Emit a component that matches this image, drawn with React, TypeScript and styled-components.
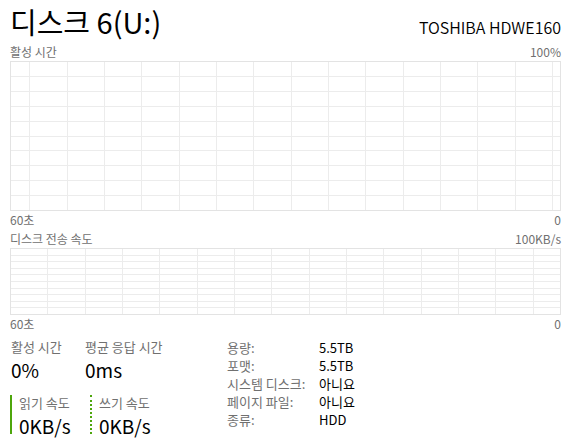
import { FC, Fragment } from 'react';
import styled, { createGlobalStyle } from 'styled-components';

const GlobalStyle = createGlobalStyle`
  html, body {
    margin: 0;
    padding: 0;
    background: #ffffff;
  }
  body {
    font-family: 'Noto Sans CJK KR', 'Noto Sans', sans-serif;
    color: #000000;
  }
`;

const Page = styled.main`
  width: 577px;
  height: 444px;
  box-sizing: border-box;
  padding: 0 16px 0 10px;
  overflow: hidden;
`;

const Header = styled.header`
  display: flex;
  justify-content: space-between;
  align-items: baseline;
  height: 42px;
`;

const Title = styled.h1`
  margin: 0;
  font-size: 29px;
  font-weight: 400;
  line-height: 43px;
`;

const Model = styled.div`
  font-size: 16px;
  line-height: 40px;
  font-weight: 350;
`;

const AxisRow = styled.div<{ gap: number }>`
  display: flex;
  justify-content: space-between;
  font-size: 12px;
  line-height: 15px;
  color: #707070;
  margin-top: ${(p) => p.gap}px;
`;

const ChartBox = styled.div<{ h: number }>`
  height: ${(p) => p.h}px;
  margin-top: 2px;
  svg {
    display: block;
  }
`;

type GridProps = {
  height: number;
  rows: number;
  offset: number;
};

const Grid: FC<GridProps> = ({ height, rows, offset }) => {
  const width = 551;
  const step = 37.33;
  const cols: number[] = [];
  for (let x = offset; x < width - 1; x += step) cols.push(Math.round(x) + 0.5);
  const hs: number[] = [];
  for (let i = 1; i < rows; i++) hs.push(Math.round(((height - 1) * i) / rows) + 0.5);
  return (
    <svg width={width} height={height} shapeRendering='crispEdges'>
      {hs.map((y) => (
        <line key={'h' + y} x1={0} x2={width} y1={y} y2={y} stroke='#ececec' />
      ))}
      {cols.map((x) => (
        <line key={'v' + x} x1={x} x2={x} y1={0} y2={height} stroke='#ececec' />
      ))}
      <rect x={0.5} y={0.5} width={width - 1} height={height - 1} fill='none' stroke='#e3e3e3' />
    </svg>
  );
};

const Stats = styled.section`
  display: flex;
  margin-top: 8px;
`;

const LeftStats = styled.div`
  width: 217px;
  display: flex;
  flex-direction: column;
`;

const StatRow = styled.div`
  display: flex;
`;

const Stat = styled.div<{ w: number }>`
  width: ${(p) => p.w}px;
  padding-left: 1px;
`;

const RateStat = styled.div<{ dotted?: boolean; w: number }>`
  width: ${(p) => p.w}px;
  box-sizing: border-box;
  border-left: 2px ${(p) => (p.dotted ? 'dotted' : 'solid')} #4da60c;
  padding-left: 7px;
  margin-top: 12px;
  height: 39px;
`;

const StatLabel = styled.div`
  font-size: 13px;
  line-height: 16px;
  color: #707070;
`;

const StatValue = styled.div`
  font-size: 19px;
  line-height: 26px;
  margin-top: 2px;
`;

const Props = styled.dl`
  display: grid;
  grid-template-columns: 92px auto;
  grid-auto-rows: 18px;
  margin: 0;
  font-size: 13px;
  line-height: 18px;

  dt {
    color: #707070;
  }
  dd {
    margin: 0;
    color: #000000;
  }
`;

const info: [string, string][] = [
  ['용량:', '5.5TB'],
  ['포맷:', '5.5TB'],
  ['시스템 디스크:', '아니요'],
  ['페이지 파일:', '아니요'],
  ['종류:', 'HDD'],
];

export default function App() {
  return (
    <>
      <GlobalStyle />
      <Page>
        <Header>
          <Title>디스크 6(U:)</Title>
          <Model>TOSHIBA HDWE160</Model>
        </Header>

        <AxisRow gap={2}>
          <span>활성 시간</span>
          <span>100%</span>
        </AxisRow>
        <ChartBox h={150}>
          <Grid height={150} rows={10} offset={19.3} />
        </ChartBox>
        <AxisRow gap={1}>
          <span>60초</span>
          <span>0</span>
        </AxisRow>

        <AxisRow gap={4}>
          <span>디스크 전송 속도</span>
          <span>100KB/s</span>
        </AxisRow>
        <ChartBox h={67}>
          <Grid height={67} rows={10} offset={37.3} />
        </ChartBox>
        <AxisRow gap={1}>
          <span>60초</span>
          <span>0</span>
        </AxisRow>

        <Stats>
          <LeftStats>
            <StatRow>
              <Stat w={73}>
                <StatLabel>활성 시간</StatLabel>
                <StatValue>0%</StatValue>
              </Stat>
              <Stat w={120}>
                <StatLabel>평균 응답 시간</StatLabel>
                <StatValue>0ms</StatValue>
              </Stat>
            </StatRow>
            <StatRow>
              <RateStat w={80}>
                <StatLabel>읽기 속도</StatLabel>
                <StatValue>0KB/s</StatValue>
              </RateStat>
              <RateStat w={100} dotted>
                <StatLabel>쓰기 속도</StatLabel>
                <StatValue>0KB/s</StatValue>
              </RateStat>
            </StatRow>
          </LeftStats>
          <Props>
            {info.map(([k, v]) => (
              <Fragment key={k}>
                <dt>{k}</dt>
                <dd>{v}</dd>
              </Fragment>
            ))}
          </Props>
        </Stats>
      </Page>
    </>
  );
}
